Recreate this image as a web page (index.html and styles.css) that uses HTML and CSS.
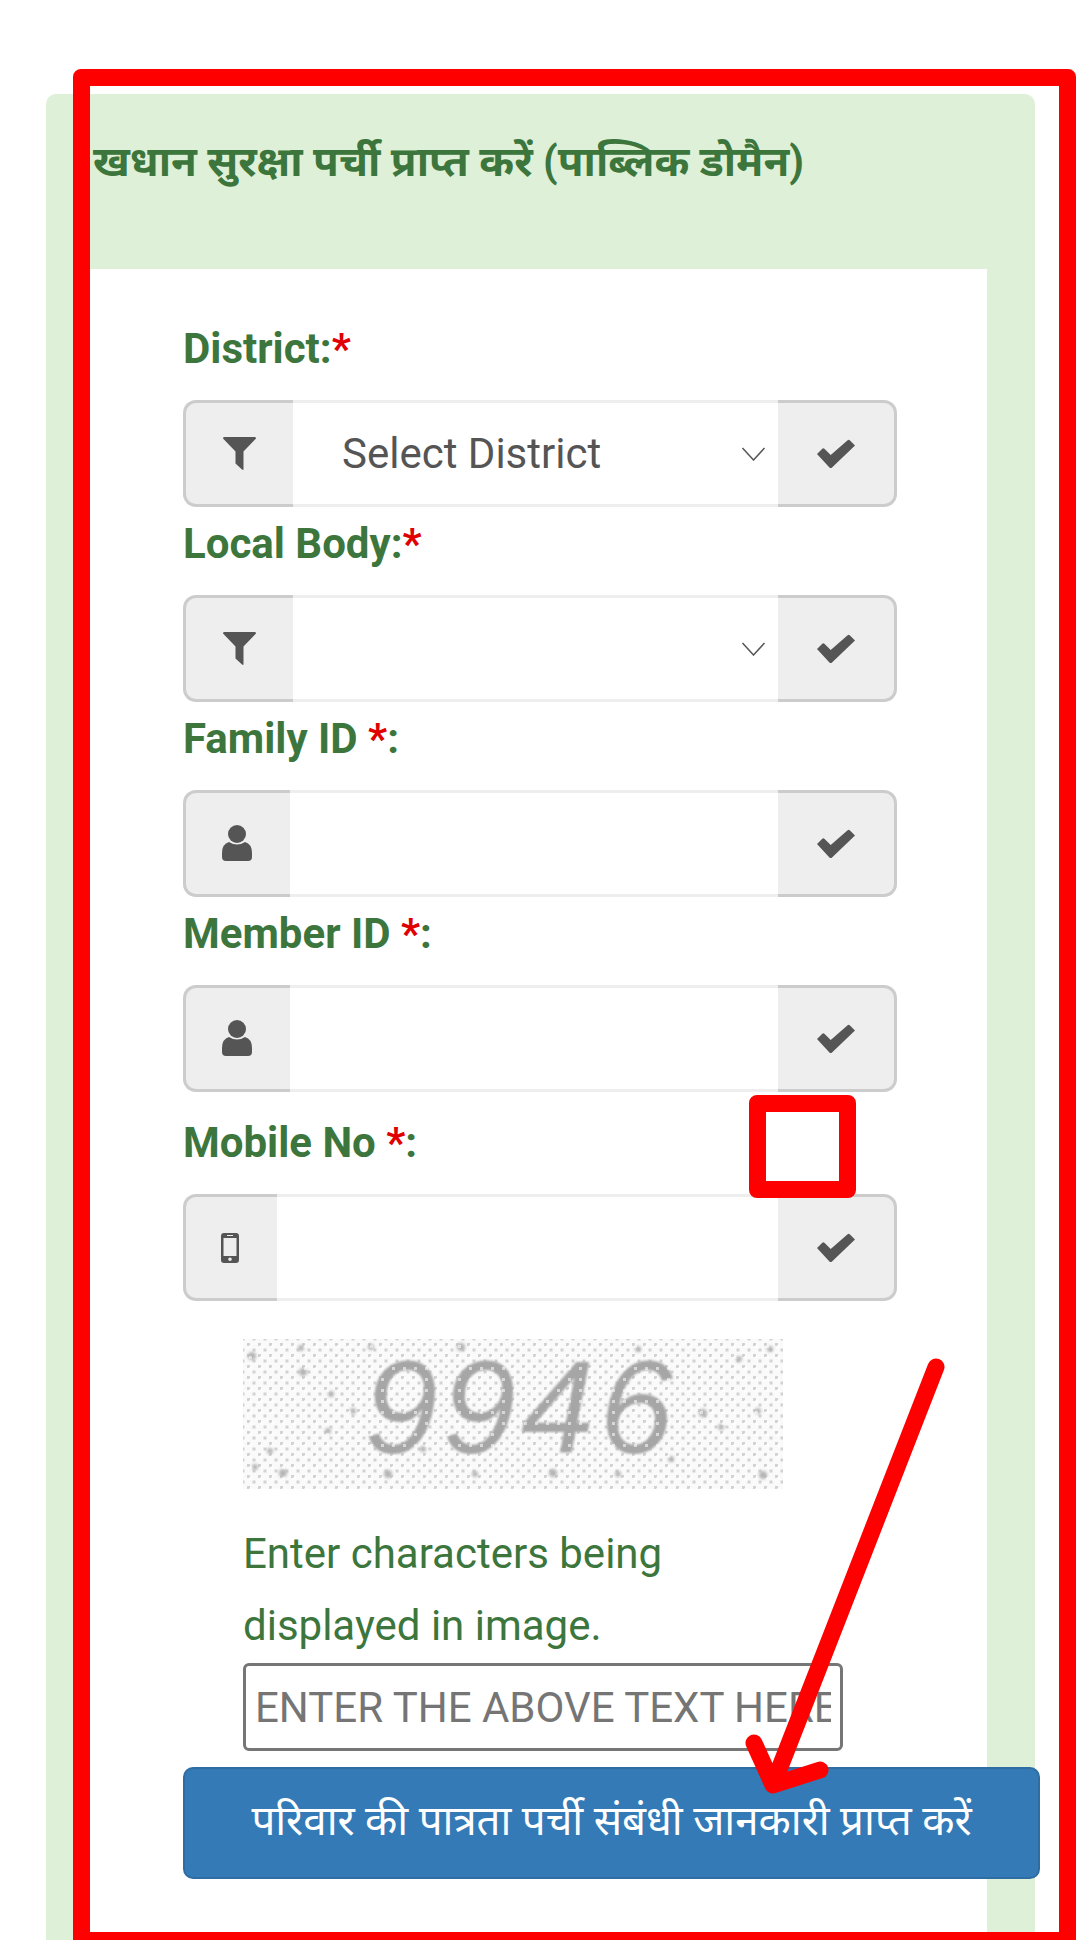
FILE: index.html
```html
<!DOCTYPE html>
<html lang="hi">
<head>
<meta charset="utf-8">
<title>सुरक्षा पर्ची</title>
<link rel="stylesheet" href="styles.css">
</head>
<body>
<main class="page">
  <section class="panel">
    <h1 class="panel-title">खधान सुरक्षा पर्ची प्राप्त करें (पाब्लिक डोमैन)</h1>
    <form class="card">
      <label class="field-label">District:<span class="req">*</span></label>
      <div class="group">
        <span class="addon addon-filter"><svg class="icon-filter" viewBox="0 0 33 33"><path d="M1 0H32Q33 0 33 1.500L20.500 14.500V32Q20.500 33.500 19 32.500L12.500 26.500V14.500L0 1.500Q0 0 1 0Z"/></svg></span>
        <div class="select-wrap">
          <select class="control select-control"><option>Select District</option></select>
          <svg class="chevron" viewBox="0 0 24 14"><path d="M1 1L12 13L23 1"/></svg>
        </div>
        <span class="addon addon-check"><svg class="icon-check" viewBox="0 0 36 27"><path d="M0 14L5 9Q6 8 7 9L13 15L29 1Q30 0 31 1L36 6L14 27Q13 27.500 12 27Z"/></svg></span>
      </div>

      <label class="field-label">Local Body:<span class="req">*</span></label>
      <div class="group">
        <span class="addon addon-filter"><svg class="icon-filter" viewBox="0 0 33 33"><path d="M1 0H32Q33 0 33 1.500L20.500 14.500V32Q20.500 33.500 19 32.500L12.500 26.500V14.500L0 1.500Q0 0 1 0Z"/></svg></span>
        <div class="select-wrap">
          <select class="control select-control"><option></option></select>
          <svg class="chevron" viewBox="0 0 24 14"><path d="M1 1L12 13L23 1"/></svg>
        </div>
        <span class="addon addon-check"><svg class="icon-check" viewBox="0 0 36 27"><path d="M0 14L5 9Q6 8 7 9L13 15L29 1Q30 0 31 1L36 6L14 27Q13 27.500 12 27Z"/></svg></span>
      </div>

      <label class="field-label">Family ID <span class="req">*</span>:</label>
      <div class="group">
        <span class="addon addon-user"><svg class="icon-user" viewBox="0 0 30 36"><circle cx="15" cy="9" r="9"/><path d="M7 17Q15 22 23 17Q30 19 30 28V32Q30 36 26 36H4Q0 36 0 32V28Q0 19 7 17Z"/></svg></span>
        <input class="control" type="text" aria-label="Family ID">
        <span class="addon addon-check"><svg class="icon-check" viewBox="0 0 36 27"><path d="M0 14L5 9Q6 8 7 9L13 15L29 1Q30 0 31 1L36 6L14 27Q13 27.500 12 27Z"/></svg></span>
      </div>

      <label class="field-label">Member ID <span class="req">*</span>:</label>
      <div class="group">
        <span class="addon addon-user"><svg class="icon-user" viewBox="0 0 30 36"><circle cx="15" cy="9" r="9"/><path d="M7 17Q15 22 23 17Q30 19 30 28V32Q30 36 26 36H4Q0 36 0 32V28Q0 19 7 17Z"/></svg></span>
        <input class="control" type="text" aria-label="Member ID">
        <span class="addon addon-check"><svg class="icon-check" viewBox="0 0 36 27"><path d="M0 14L5 9Q6 8 7 9L13 15L29 1Q30 0 31 1L36 6L14 27Q13 27.500 12 27Z"/></svg></span>
      </div>

      <label class="field-label field-label-spaced">Mobile No <span class="req">*</span>:</label>
      <div class="group">
        <span class="addon addon-phone"><svg class="icon-phone" viewBox="0 0 18 30"><path fill-rule="evenodd" d="M3 0H15Q18 0 18 3V27Q18 30 15 30H3Q0 30 0 27V3Q0 0 3 0ZM2.500 5V23H15.500V5ZM6 2V3H12V2ZM9 24.500A1.800 1.800 0 1 0 9 28.100A1.800 1.800 0 1 0 9 24.500Z"/></svg></span>
        <input class="control" type="tel" aria-label="Mobile No">
        <span class="addon addon-check"><svg class="icon-check" viewBox="0 0 36 27"><path d="M0 14L5 9Q6 8 7 9L13 15L29 1Q30 0 31 1L36 6L14 27Q13 27.500 12 27Z"/></svg></span>
      </div>

      <div class="captcha-block">
        <div class="captcha">
          <svg class="captcha-noise" viewBox="0 0 540 150" preserveAspectRatio="none">
            <g>
              <circle cx="9" cy="17" r="4"/><circle cx="58" cy="9" r="3"/><circle cx="60" cy="33" r="4"/><circle cx="88" cy="55" r="3"/><circle cx="218" cy="8" r="4"/><circle cx="128" cy="8" r="3"/><circle cx="27" cy="112" r="3"/><circle cx="40" cy="134" r="4"/><circle cx="145" cy="135" r="4"/><circle cx="232" cy="135" r="3"/><circle cx="310" cy="134" r="4"/><circle cx="428" cy="120" r="3"/><circle cx="527" cy="10" r="3"/><circle cx="520" cy="136" r="4"/><circle cx="515" cy="72" r="3"/><circle cx="395" cy="10" r="3"/><circle cx="85" cy="92" r="3"/><circle cx="110" cy="72" r="3"/><circle cx="460" cy="74" r="4"/><circle cx="478" cy="88" r="3"/><circle cx="375" cy="135" r="3"/><circle cx="496" cy="20" r="3"/><circle cx="12" cy="128" r="3"/><circle cx="180" cy="110" r="3"/>
            </g>
          </svg>
          <span class="captcha-text">9946</span>
        </div>
        <p class="captcha-help">Enter characters being displayed in image.</p>
        <input class="captcha-input" type="text" placeholder="ENTER THE ABOVE TEXT HERE">
      </div>

      <button class="submit" type="button">परिवार की पात्रता पर्ची संबंधी जानकारी प्राप्त करें</button>
    </form>
  </section>

  <div class="mark-frame"></div>
  <div class="mark-box"></div>
  <svg class="mark-arrow" viewBox="0 0 1080 1940"><path d="M936 1367L773 1785M754 1743L773 1785L820 1770"/></svg>
</main>
</body>
</html>
```

FILE: styles.css
```css
* { box-sizing: border-box; }
html, body { margin: 0; padding: 0; background: #fff; }
.page {
  position: relative;
  width: 1080px;
  height: 1940px;
  overflow: hidden;
  padding: 94px 0 0 46px;
  font-family: Roboto, "Noto Sans", sans-serif;
}
.panel {
  width: 989px;
  height: 1900px;
  padding: 0 48px 0 44px;
  background: #dff0d8;
  border-radius: 10px 10px 0 0;
}
.panel-title {
  margin: 0;
  height: 175px;
  padding: 41px 0 0 3px;
  font-size: 42px;
  line-height: 54px;
  font-weight: 700;
  color: #3c763d;
  white-space: nowrap;
}
.card {
  background: #fff;
  height: 1725px;
  padding: 43px 0 0 93px;
}
.field-label {
  display: block;
  height: 73px;
  margin-bottom: 15px;
  font-size: 42px;
  line-height: 73px;
  font-weight: 700;
  color: #3c763d;
}
.field-label-spaced { margin-top: 14px; }
.req { color: #e00000; }
.group {
  display: flex;
  width: 714px;
  height: 107px;
}
.addon {
  flex: none;
  display: flex;
  align-items: center;
  justify-content: center;
  background: #eee;
  border: 3px solid #ccc;
}
.addon-filter, .addon-user, .addon-phone {
  border-right: 0;
  border-radius: 13px 0 0 13px;
}
.addon-filter { width: 110px; }
.addon-user { width: 107px; }
.addon-phone { width: 94px; }
.addon-check {
  width: 119px;
  border-left: 0;
  border-radius: 0 13px 13px 0;
}
.addon svg { display: block; fill: #555; }
.icon-filter { width: 33px; height: 35px; }
.icon-user { width: 30px; height: 38px; margin: -2px 3px 0 0; }
.icon-phone { width: 18px; height: 30px; margin-right: 4px; }
.icon-check { width: 38px; height: 29px; }
.select-wrap {
  position: relative;
  flex: 1;
  min-width: 0;
  display: flex;
}
.control {
  flex: 1;
  min-width: 0;
  height: 100%;
  border: solid #eee;
  border-width: 3px 0;
  background: #fff;
  outline: 0;
  font-family: inherit;
}
.select-control {
  appearance: none;
  -webkit-appearance: none;
  width: 100%;
  padding: 0 0 0 49px;
  font-size: 42px;
  color: #555;
}
.chevron {
  position: absolute;
  right: 12px;
  top: 47px;
  width: 25px;
  height: 14px;
  fill: none;
  stroke: #555;
  stroke-width: 1.5;
}
.captcha-block { padding: 38px 0 0 60px; }
.captcha {
  position: relative;
  width: 540px;
  height: 150px;
  display: flex;
  align-items: center;
  justify-content: center;
  background-color: #fafafa;
  background-image: radial-gradient(circle, #d2d2d2 1.4px, transparent 2px), radial-gradient(circle, #d2d2d2 1.4px, transparent 2px);
  background-size: 11px 11px;
  background-position: 0 0, 5.500px 5.500px;
}
.captcha::after {
  content: "";
  position: absolute;
  inset: 0;
  background-image: radial-gradient(circle, rgba(255, 255, 255, .55) 1.5px, transparent 2px);
  background-size: 11px 11px;
  background-position: 2px 2px;
}
.captcha-noise {
  position: absolute;
  inset: 0;
  width: 100%;
  height: 100%;
  fill: #b4b4b4;
  filter: blur(1.500px);
}
.captcha-text {
  position: relative;
  top: -6px;
  left: 8px;
  font-family: "Liberation Sans", sans-serif;
  font-style: italic;
  font-size: 132px;
  line-height: 150px;
  letter-spacing: 5px;
  color: #a6a6a6;
  filter: blur(1px);
}
.captcha-help {
  width: 470px;
  margin: 29px 0 0;
  font-size: 42px;
  line-height: 72px;
  color: #3c763d;
}
.captcha-input {
  display: block;
  width: 600px;
  height: 88px;
  margin-top: 1px;
  padding: 0 9px;
  border: 3px solid #767676;
  border-radius: 6px;
  font-family: inherit;
  font-size: 42px;
  outline: 0;
}
.captcha-input::placeholder { color: #757575; opacity: 1; }
.submit {
  display: block;
  width: 857px;
  height: 112px;
  margin-top: 16px;
  padding: 0 0 10px;
  border: 2px solid #2e6da4;
  border-radius: 10px;
  background: #337ab7;
  color: #fff;
  font-family: inherit;
  font-size: 42px;
  white-space: nowrap;
}
.mark-frame {
  position: absolute;
  left: 73px;
  top: 69px;
  width: 1003px;
  height: 1880px;
  border: 17px solid #ff0000;
  border-radius: 8px;
  pointer-events: none;
}
.mark-box {
  position: absolute;
  left: 749px;
  top: 1095px;
  width: 107px;
  height: 103px;
  border: 17px solid #ff0000;
  border-radius: 8px;
  pointer-events: none;
}
.mark-arrow {
  position: absolute;
  left: 0;
  top: 0;
  width: 1080px;
  height: 1940px;
  fill: none;
  stroke: #ff0000;
  stroke-width: 17;
  stroke-linecap: round;
  stroke-linejoin: round;
  pointer-events: none;
}
```
